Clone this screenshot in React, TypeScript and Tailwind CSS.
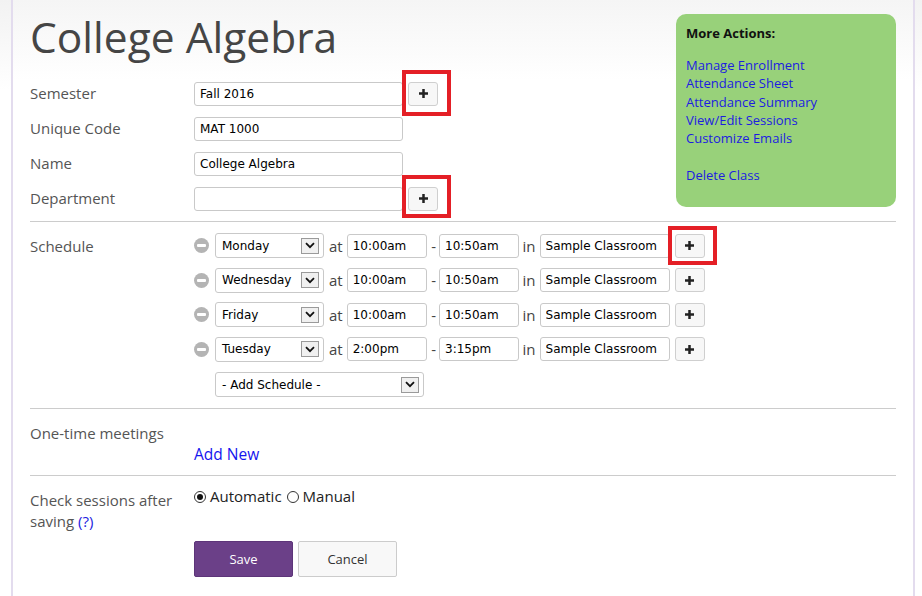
import React from 'react';

const sans = "font-['Open_Sans',sans-serif]";
const field =
  "h-[24px] border border-[#c9c9c9] rounded-[3px] bg-white pl-[5px] text-[12px] text-black outline-none font-['DejaVu_Sans',Verdana,sans-serif]";

function Plus() {
  return (
    <svg width="11" height="11" viewBox="0 0 11 11">
      <path d="M5.5 1v9M1 5.5h9" stroke="#222" strokeWidth="2.5" />
    </svg>
  );
}

function PlusButton({ mark, className = '' }: { mark?: string; className?: string }) {
  return (
    <div className={`relative ${className}`}>
      <button className="flex h-[24px] w-[30px] items-center justify-center rounded-[3px] border border-[#cfcfcf] bg-[#f7f7f7]">
        <Plus />
      </button>
      {mark && <div className={`pointer-events-none absolute border-[4px] border-[#e41f26] ${mark}`} />}
    </div>
  );
}

function Minus() {
  return (
    <span className="flex h-[15px] w-[15px] shrink-0 items-center justify-center rounded-full bg-[#b4b4b4]">
      <span className="h-[3px] w-[9px] rounded-[1px] bg-white" />
    </span>
  );
}

function Select({ value, className }: { value: string; className: string }) {
  return (
    <div className={`flex h-[25px] items-center justify-between rounded-[3px] border border-[#c9c9c9] bg-white pl-[6px] pr-[4px] text-[12px] text-black font-['DejaVu_Sans',Verdana,sans-serif] ${className}`}>
      <span>{value}</span>
      <span className="flex h-[16px] w-[18px] items-center justify-center border border-[#9a9a9a] bg-[#f0f0f0]">
        <svg width="10" height="7" viewBox="0 0 10 7">
          <path d="M1 1.2l4 4 4-4" fill="none" stroke="#111" strokeWidth="1.8" />
        </svg>
      </span>
    </div>
  );
}

function Label({ children, className = '' }: { children: React.ReactNode; className?: string }) {
  return <div className={`w-[164px] shrink-0 pr-[10px] text-[15px] text-[#555] ${className}`}>{children}</div>;
}

const schedule = [
  { day: 'Monday', from: '10:00am', to: '10:50am' },
  { day: 'Wednesday', from: '10:00am', to: '10:50am' },
  { day: 'Friday', from: '10:00am', to: '10:50am' },
  { day: 'Tuesday', from: '2:00pm', to: '3:15pm' },
];

function Radio({ checked }: { checked?: boolean }) {
  return (
    <span className="flex h-[12px] w-[12px] items-center justify-center rounded-full border border-[#333] bg-white">
      {checked && <span className="h-[6px] w-[6px] rounded-full bg-[#111]" />}
    </span>
  );
}

export default function App() {
  return (
    <div className={`min-h-[596px] w-full bg-[linear-gradient(to_bottom,#f2f2f2_0px,#ffffff_90px)] ${sans}`}>
      <div className="ml-[11px] min-h-[596px] w-[904px] border-x-[2px] border-[#e3dcee] bg-[linear-gradient(to_bottom,#f5f5f5_0px,#ffffff_80px)] px-[17px] pt-[11px]">
        {/* top: basic info + more actions */}
        <div className="flex items-start">
          <div className="flex-1">
            <h1 className="mb-[13px] text-[42.5px] leading-[52px] text-[#454545]">College Algebra</h1>

            <div className="flex h-[35px] items-center">
              <Label>Semester</Label>
              <input className={`${field} w-[209px]`} defaultValue="Fall 2016" />
              <PlusButton className="ml-[5px]" mark="-left-[6px] -top-[12px] h-[46px] w-[49px]" />
            </div>
            <div className="flex h-[35px] items-center">
              <Label>Unique Code</Label>
              <input className={`${field} w-[209px]`} defaultValue="MAT 1000" />
            </div>
            <div className="flex h-[35px] items-center">
              <Label>Name</Label>
              <input className={`${field} w-[209px]`} defaultValue="College Algebra" />
            </div>
            <div className="flex h-[35px] items-center">
              <Label>Department</Label>
              <input className={`${field} w-[209px]`} defaultValue="" />
              <PlusButton className="ml-[5px]" mark="-left-[6px] -top-[12px] h-[43px] w-[49px]" />
            </div>
          </div>

          <div className="mt-[3px] h-[193px] w-[220px] rounded-[10px] bg-[#98d17a] px-[10px] pt-[10px] text-[13px]">
            <div className="font-bold leading-[18px] text-[#111]">More Actions:</div>
            <div className="mt-[14px] flex flex-col leading-[18.3px] text-[#1c1ce0]">
              <a href="#">Manage Enrollment</a>
              <a href="#">Attendance Sheet</a>
              <a href="#">Attendance Summary</a>
              <a href="#">View/Edit Sessions</a>
              <a href="#">Customize Emails</a>
              <a href="#" className="mt-[18.3px]">Delete Class</a>
            </div>
          </div>
        </div>

        {/* schedule */}
        <div className="mt-[5px] flex border-t border-[#cccccc] pb-[11px] pt-[6.5px]">
          <Label className="flex h-[34.5px] items-center">Schedule</Label>
          <div>
            {schedule.map((s, i) => (
              <div key={s.day} className="flex h-[34.5px] items-center text-[15px] text-[#444]">
                <Minus />
                <Select value={s.day} className="ml-[6px] w-[109px]" />
                <span className="ml-[5px]">at</span>
                <input className={`${field} ml-[4px] w-[80px]`} defaultValue={s.from} />
                <span className="ml-[4.5px]">-</span>
                <input className={`${field} ml-[3px] w-[80px]`} defaultValue={s.to} />
                <span className="ml-[3.5px]">in</span>
                <input className={`${field} ml-[4px] w-[130px]`} defaultValue="Sample Classroom" />
                <PlusButton
                  className="ml-[5px]"
                  mark={i === 0 ? '-left-[7px] -top-[8px] h-[39px] w-[49px]' : undefined}
                />
              </div>
            ))}
            <Select value="- Add Schedule -" className="ml-[21px] mt-[5.5px] w-[209px]" />
          </div>
        </div>

        {/* one-time meetings */}
        <div className="border-t border-[#cccccc] pb-[10px] pt-[14px]">
          <div className="text-[15px] leading-[20px] text-[#555]">One-time meetings</div>
          <a href="#" className="ml-[164px] block text-[15.5px] leading-[22px] text-[#1414ee]">
            Add New
          </a>
        </div>

        {/* check sessions */}
        <div className="flex items-start border-t border-[#cccccc] pt-[10px]">
          <Label className="pt-[4px] leading-[21px]">
            Check sessions after
            <br />
            saving <a href="#" className="text-[#1c1ce0]">(?)</a>
          </Label>
          <div>
            <div className="flex h-[21px] items-center text-[15px] text-[#222]">
              <Radio checked />
              <span className="ml-[4px]">Automatic</span>
              <span className="ml-[5px]">
                <Radio />
              </span>
              <span className="ml-[4px]">Manual</span>
            </div>
            <div className="mt-[34px] flex gap-[5px] text-[13px]">
              <button className="h-[36px] w-[99px] rounded-[2px] border border-[#5d3579] bg-[#6b4088] pt-[1px] text-white">
                Save
              </button>
              <button className="h-[36px] w-[99px] rounded-[2px] border border-[#cccccc] bg-[#f8f8f8] pt-[1px] text-[#333]">
                Cancel
              </button>
            </div>
          </div>
        </div>
      </div>
    </div>
  );
}
